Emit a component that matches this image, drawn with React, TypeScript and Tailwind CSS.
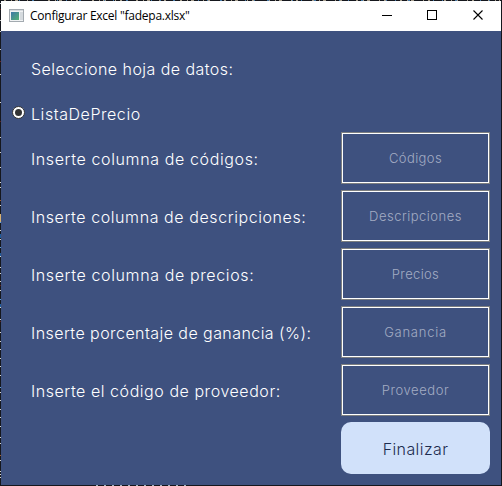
const fields = [
  { label: "Inserte columna de códigos:", hint: "Códigos", track: "tracking-[0.62px]", hintTrack: "tracking-[0.4px]" },
  { label: "Inserte columna de descripciones:", hint: "Descripciones", track: "tracking-[0.58px]", hintTrack: "tracking-[0.5px]" },
  { label: "Inserte columna de precios:", hint: "Precios", track: "tracking-[0.62px]", hintTrack: "tracking-[0.35px]" },
  { label: "Inserte porcentaje de ganancia (%):", hint: "Ganancia", track: "tracking-[0.44px]", hintTrack: "tracking-[0.75px]" },
  { label: "Inserte el código de proveedor:", hint: "Proveedor", track: "tracking-[0.55px]", hintTrack: "tracking-[0.6px]" },
];

function Edge() {
  const marks = [
    [3, "#d0d0d0"], [9, "#5a2020"], [20, "#d0d0d0"], [31, "#d0d0d0"], [49, "#c8c8c8"], [61, "#6b2222"], [74, "#c8c8c8"],
    [102, "#d0d0d0"], [121, "#5a2020"], [137, "#c8c8c8"], [152, "#c8c8c8"], [167, "#d0d0d0"], [182, "#d0d0d0"], [187, "#d0d0d0"],
    [200, "#a35a2b"], [205, "#d0d0d0"], [214, "#d8b070"], [218, "#d8b070"], [222, "#5fa0dd"], [230, "#d0d0d0"], [234, "#1d5a9a"],
    [239, "#d0d0d0"], [247, "#5fa0dd"], [253, "#1d5a9a"], [256, "#d0d0d0"], [267, "#d0d0d0"], [273, "#d0d0d0"], [281, "#d0d0d0"],
    [285, "#5a2020"], [290, "#d0d0d0"], [299, "#5fa0dd"], [304, "#1d5a9a"], [307, "#d0d0d0"], [319, "#d0d0d0"], [321, "#5a2020"],
    [332, "#d0d0d0"], [341, "#d0d0d0"], [349, "#d0d0d0"], [358, "#d0d0d0"], [366, "#d0d0d0"], [375, "#d0d0d0"], [387, "#5fa0dd"],
    [392, "#d0d0d0"], [400, "#d0d0d0"], [409, "#d0d0d0"], [417, "#d0d0d0"], [426, "#d0d0d0"], [437, "#d0d0d0"], [443, "#d0d0d0"],
    [455, "#a35a2b"], [460, "#d0d0d0"], [471, "#d0d0d0"], [474, "#d0d0d0"], [477, "#d0d0d0"],
  ] as const;
  return (
    <svg className="pointer-events-none absolute inset-0" width="502" height="486" shapeRendering="crispEdges">
      {marks.map(([y, c]) => (
        <rect key={y} x="0" y={y} width="1" height={c === "#1d5a9a" || c === "#d8b070" ? 4 : 1} fill={c} />
      ))}
      <path d="M4 .5H500" stroke="#a9a08f" strokeDasharray="2 5 1 3 3 9 1 4 2 14" />
      <path d="M19 .5H500" stroke="#477aa8" strokeDasharray="1 12 2 23 1 8" />
      <path d="M96 485.5H187" stroke="#a9b8c0" strokeDasharray="2 6" />
    </svg>
  );
}

function TitleBar() {
  return (
    <header className="flex h-[30px] shrink-0 items-center bg-white text-black">
      <svg className="ml-2 shrink-0" width="16" height="14" viewBox="0 0 16 14" shapeRendering="crispEdges">
        <defs>
          <linearGradient id="pane" x1="0" y1="0" x2="1" y2="1">
            <stop offset="0" stopColor="#3f78a8" />
            <stop offset="1" stopColor="#55b274" />
          </linearGradient>
        </defs>
        <rect x=".5" y=".5" width="14" height="12" fill="#f1f3f4" stroke="#a3aab0" />
        <path d="M1 1.5H14" stroke="#d7dbdf" />
        <rect x="2" y="3" width="8" height="8" fill="url(#pane)" />
        <rect x="11" y="3" width="3" height="8" fill="#d5dade" />
      </svg>
      <span className="ml-[5px] flex-1 whitespace-nowrap font-['Open_Sans','Noto_Sans',sans-serif] text-[12px] font-normal tracking-[-0.25px]">
        Configurar Excel "fadepa.xlsx"
      </span>
      <svg width="119" height="30" viewBox="0 0 119 30" fill="none" stroke="#000">
        <path d="M0 14.5H10" shapeRendering="crispEdges" />
        <rect x="45.5" y="9.5" width="9" height="9" shapeRendering="crispEdges" />
        <path d="M91.5 9.5L100.5 18.5M100.5 9.5L91.5 18.5" strokeWidth="1.1" />
      </svg>
    </header>
  );
}

export default function App() {
  return (
    <div className="relative flex h-[486px] w-[502px] flex-col bg-[#15171d] p-px font-['Inter','Liberation_Sans',sans-serif] text-[16px] font-light text-white">
      <TitleBar />
      <main className="flex-1 bg-[#3e517f] pr-[11px] pl-[11px]">
        <p className="flex h-[76px] items-center pl-[19px] whitespace-nowrap">
          <span className="tracking-[0.44px]">Seleccione hoja de datos:</span>
        </p>
        <label className="flex h-[14px] items-center whitespace-nowrap">
          <svg className="mr-[6px] mb-[3px] shrink-0" width="13" height="13" viewBox="0 0 13 13">
            <circle cx="6.5" cy="6.5" r="6" fill="#fff" stroke="#333" />
            <circle cx="6.5" cy="6.5" r="3.5" fill="#333" />
          </svg>
          <span className="tracking-[0.56px]">ListaDePrecio</span>
        </label>
        <div className="mt-[11px] flex flex-col gap-[6px]">
          {fields.map((f) => (
            <div key={f.hint} className="flex h-[52px] items-center justify-between">
              <span className={`pt-[2px] pl-[19px] whitespace-nowrap ${f.track}`}>{f.label}</span>
              <div className="h-[52px] w-[149px] border border-[#7d7f80]">
                <div className="flex h-full items-center justify-center border border-white pt-[2px] text-[13px] text-[#a3acc3]">
                  <span className={f.hintTrack}>{f.hint}</span>
                </div>
              </div>
            </div>
          ))}
          <button className="ml-auto h-[52px] w-[149px] rounded-[10px] bg-[#d1e1fa] pt-[2px] text-[#1d2c50]">
            <span className="tracking-[0.4px]">Finalizar</span>
          </button>
        </div>
      </main>
      <Edge />
    </div>
  );
}
